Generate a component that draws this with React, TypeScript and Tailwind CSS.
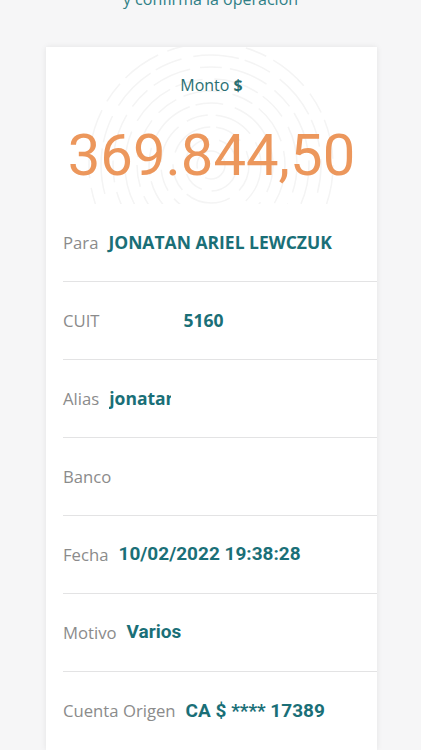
export default function App() {
  const rows = [
    { label: 'Para', value: 'JONATAN ARIEL LEWCZUK', font: 'sans' },
    { label: 'CUIT', value: '5160', font: 'sans', gap: 'ml-[84px]' },
    { label: 'Alias', value: 'jonatan', font: 'sans', cut: true },
    { label: 'Banco', value: '', font: 'sans' },
    { label: 'Fecha', value: '10/02/2022 19:38:28', font: 'roboto' },
    { label: 'Motivo', value: 'Varios', font: 'roboto' },
    { label: 'Cuenta Origen', value: 'CA $ **** 17389', font: 'roboto' },
  ];

  return (
    <div className="w-[421px] h-[750px] overflow-hidden bg-[#f6f6f7] font-['Open_Sans',sans-serif]">
      {/* Header text, partly scrolled off */}
      <p className="mt-[-11px] text-center text-[16px] leading-[20px] text-[#2f7f86]">
        y confirma la operación
      </p>

      {/* Main card */}
      <div className="ml-[46px] mt-[38px] w-[331px] bg-white shadow-[0_0_6px_rgba(0,0,0,0.08)]">
        {/* Amount */}
        <div className="relative h-[157px] overflow-hidden">
          <svg className="absolute left-0 top-0" width="331" height="157" viewBox="0 0 331 157" fill="none">
            {[14, 26, 38, 50, 62, 74, 86, 98, 110, 122].map((r, i) => (
              <circle
                key={r}
                cx="165"
                cy="118"
                r={r}
                stroke="#f4f4f4"
                strokeWidth="1.5"
                strokeDasharray={i % 2 ? '40 10 22 8' : '28 12 46 6'}
              />
            ))}
          </svg>
          <div className="relative flex flex-col items-center">
            <p className="mt-[27px] text-[16px] leading-[22px] text-[#2a6f72]">
              Monto <span className="font-bold">$</span>
            </p>
            <p className="mt-[24px] font-['Roboto',sans-serif] text-[58px] leading-[70px] text-[#ec975c]">
              369.844,50
            </p>
          </div>
        </div>

        {/* Detail rows */}
        {rows.map((row, i) => (
          <div
            key={row.label}
            className={`ml-[17px] h-[78px] flex items-center ${i < rows.length - 1 ? 'border-b border-[#e3e3e4]' : ''}`}
          >
            <span className="text-[16.7px] text-[#8b8b8b]">{row.label}</span>
            {row.value && (
              <span
                className={`${row.gap ?? 'ml-[10px]'} font-bold text-[#1a6f77] whitespace-nowrap ${
                  row.font === 'roboto' ? "font-['Roboto',sans-serif] text-[19px]" : 'text-[17.5px]'
                } ${row.cut ? 'w-[62px] overflow-hidden' : ''}`}
              >
                {row.value}
              </span>
            )}
          </div>
        ))}
      </div>
    </div>
  );
}
